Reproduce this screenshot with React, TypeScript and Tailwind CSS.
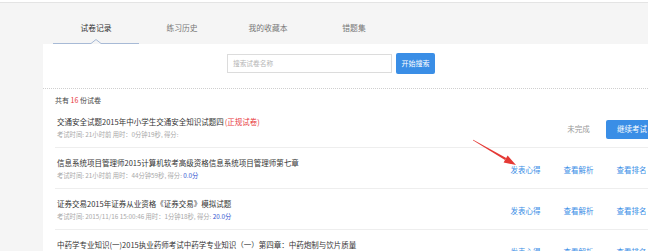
import React from 'react';

const FONT = "font-['Noto_Sans_CJK_SC','Liberation_Sans',sans-serif]";

type Row = {
  title: string;
  tag?: string;
  meta: string;
  score?: string;
  status?: 'pending' | 'done';
};

const ROWS: Row[] = [
  { title: '交通安全试题2015年中小学生交通安全知识试题四', tag: '(正规试卷)', meta: '考试时间: 21小时前 用时：0分钟19秒, 得分:', status: 'pending' },
  { title: '信息系统项目管理师2015计算机软考高级资格信息系统项目管理师第七章', meta: '考试时间: 21小时前 用时：44分钟59秒, 得分: ', score: '0.0分', status: 'done' },
  { title: '证券交易2015年证券从业资格《证券交易》模拟试题', meta: '考试时间: 2015/11/16 15:00:46 用时：1分钟18秒, 得分: ', score: '20.0分', status: 'done' },
  { title: '中药学专业知识(一)2015执业药师考试中药学专业知识（一）第四章：中药炮制与饮片质量', meta: '考试时间: 2015/11/16 14:52:10 用时：2分钟05秒, 得分: ', score: '10.0分', status: 'done' },
];

const TABS = ['试卷记录', '练习历史', '我的收藏本', '错题集'];

const App: React.FC = () => {
  return (
    <div className={`relative w-[648px] h-[251px] overflow-hidden bg-[#f5f5f5] ${FONT}`}>
      {/* top strip */}
      <div className="h-[3px] bg-white border-b border-[#e4e4e4]" />

      {/* Tabs */}
      <div className="h-[41px] flex pl-[53px]">
        {TABS.map((t, i) => (
          <div key={t} className="w-[86px] flex flex-col items-center justify-end">
            <span className={`text-[7.8px] leading-[8px] ${i === 0 ? 'text-[#333]' : 'text-[#777]'}`}>{t}</span>
            {i === 0 ? (
              <svg width="86" height="6" className="mt-[6px] block">
                <path d="M0 5.5 H38 L43 1.5 L48 5.5 H86" stroke="#a7bad6" strokeWidth="1" fill="none" />
              </svg>
            ) : (
              <div className="h-[6px] mt-[6px]" />
            )}
          </div>
        ))}
      </div>

      {/* Card */}
      <div className="ml-[43px] w-[625px] bg-white">
        <div className="pt-[9px] pb-[14px] pl-[184px] flex items-center border-b border-dotted border-[#cfcfcf]">
          <div className="w-[165px] h-[19px] border border-[#dcdcdc] flex items-center pl-[5px] text-[6.7px] text-[#b5b5b5]">
            搜索试卷名称
          </div>
          <div className="ml-[4px] w-[39px] h-[21px] rounded-[2px] bg-[#3a8ee6] text-white text-[7px] flex items-center justify-center">
            开始搜索
          </div>
        </div>

        <div className="pl-[12px] pt-[7px] text-[7px] leading-[8px] text-[#444] mb-[3px]">
          共有 <span className="text-[#e8383d]">16</span> 份试卷
        </div>

        <div className="pl-[12px]">
          {ROWS.map((r, idx) => (
            <div key={idx} className="h-[41px] border-b border-[#eeeeee] flex justify-between pr-[10px]">
              <div className="pl-[2px] pt-[10px]">
                <div className="text-[7.5px] leading-[10px] text-[#333] whitespace-nowrap">
                  {r.title}
                  {r.tag && <span className="text-[#e8383d] ml-[1px]">{r.tag}</span>}
                </div>
                <div className="mt-[4px] text-[6.3px] leading-[8px] text-[#a8a8a8] whitespace-nowrap">
                  {r.meta}
                  {r.score && <span className="text-[#3153d0]">{r.score}</span>}
                </div>
              </div>
              <div className="flex items-center mt-[4px] text-[7.5px]">
                {r.status === 'pending' ? (
                  <>
                    <div className="w-[53px]" />
                    <div className="w-[53px] text-center text-[#999]">未完成</div>
                    <div className="w-[53px] flex justify-end">
                      <div className="w-[52px] h-[19px] rounded-[2px] bg-[#3a8ee6] text-white flex items-center justify-center">继续考试</div>
                    </div>
                  </>
                ) : (
                  <>
                    <div className="w-[53px] text-center text-[#3a8ee6]">发表心得</div>
                    <div className="w-[53px] text-center text-[#3a8ee6]">查看解析</div>
                    <div className="w-[53px] text-center text-[#3a8ee6]">查看排名</div>
                  </>
                )}
              </div>
            </div>
          ))}
        </div>
      </div>

      {/* annotation arrow */}
      <svg className="absolute inset-0 pointer-events-none" width="648" height="251" viewBox="0 0 648 251">
        <polygon points="473.15,139.74 506.2,158 505,160.1 472.85,140.26" fill="#e53935" />
        <polygon points="516,165 503.6,162.5 507.6,155.6" fill="#e53935" />
      </svg>
    </div>
  );
};

export default App;
